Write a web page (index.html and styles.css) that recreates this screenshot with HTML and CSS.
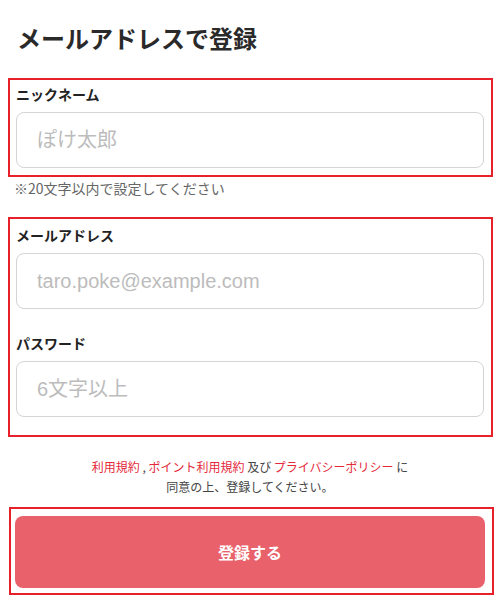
FILE: index.html
```html
<!DOCTYPE html>
<html lang="ja">
<head>
<meta charset="utf-8">
<title>メールアドレスで登録</title>
<link rel="stylesheet" href="styles.css">
</head>
<body>
<h1 class="title">メールアドレスで登録</h1>

<section class="box box-nick">
  <label class="label" for="nick">ニックネーム</label>
  <input class="field" id="nick" type="text" placeholder="ぽけ太郎">
</section>
<p class="note">※20文字以内で設定してください</p>

<section class="box box-account">
  <label class="label" for="mail">メールアドレス</label>
  <input class="field" id="mail" type="email" placeholder="taro.poke@example.com">
  <label class="label label-second" for="pass">パスワード</label>
  <input class="field" id="pass" type="password" placeholder="6文字以上">
</section>

<p class="terms">
  <a class="link" href="#">利用規約</a> , <a class="link" href="#">ポイント利用規約</a> 及び <a class="link" href="#">プライバシーポリシー</a> に<br>
  同意の上、登録してください。
</p>

<section class="box box-submit">
  <button class="submit" type="button">登録する</button>
</section>
</body>
</html>
```

FILE: styles.css
```css
* {
  box-sizing: border-box;
}

html, body {
  margin: 0;
  padding: 0;
  background: #ffffff;
}

body {
  width: 500px;
  font-family: "Noto Sans CJK JP", "Noto Sans", sans-serif;
  color: #222222;
}

.title {
  margin: 0;
  padding: 20px 0 0 17px;
  font-size: 24px;
  line-height: 36px;
  font-weight: 700;
  color: #2a2a2a;
}

.box {
  border: 2px solid #e8202a;
  width: 485px;
}

.box-nick {
  margin: 22px 0 0 8px;
  padding: 4px 7px 7px 6px;
}

.box-account {
  margin: 19px 0 0 8px;
  padding: 6px 7px 18px 6px;
}

.box-submit {
  margin: 10px 0 0 9px;
  padding: 7px 7px 5px 4px;
}

.label {
  display: block;
  font-size: 14px;
  line-height: 20px;
  font-weight: 700;
  color: #222222;
}

.label-second {
  margin-top: 24px;
}

.field {
  display: block;
  width: 100%;
  height: 56px;
  margin: 8px 0 0;
  padding: 0 20px;
  border: 1px solid #d4d4d4;
  border-radius: 8px;
  background: #ffffff;
  font-family: "Liberation Sans", "Noto Sans CJK JP", sans-serif;
  font-size: 20px;
  color: #222222;
  outline: none;
}

.field::placeholder {
  color: #bcbcbc;
}

.note {
  margin: 1px 0 0;
  padding-left: 14px;
  font-size: 14px;
  line-height: 20px;
  color: #666666;
}

.terms {
  margin: 20px 0 0;
  text-align: center;
  font-size: 12px;
  line-height: 20px;
  color: #444444;
}

.link {
  color: #e5283a;
  text-decoration: none;
}

.submit {
  display: block;
  width: 100%;
  height: 72px;
  border: 0;
  border-radius: 8px;
  background: #e8616b;
  color: #ffffff;
  font-family: "Noto Sans CJK JP", sans-serif;
  font-size: 16px;
  font-weight: 700;
}
```
